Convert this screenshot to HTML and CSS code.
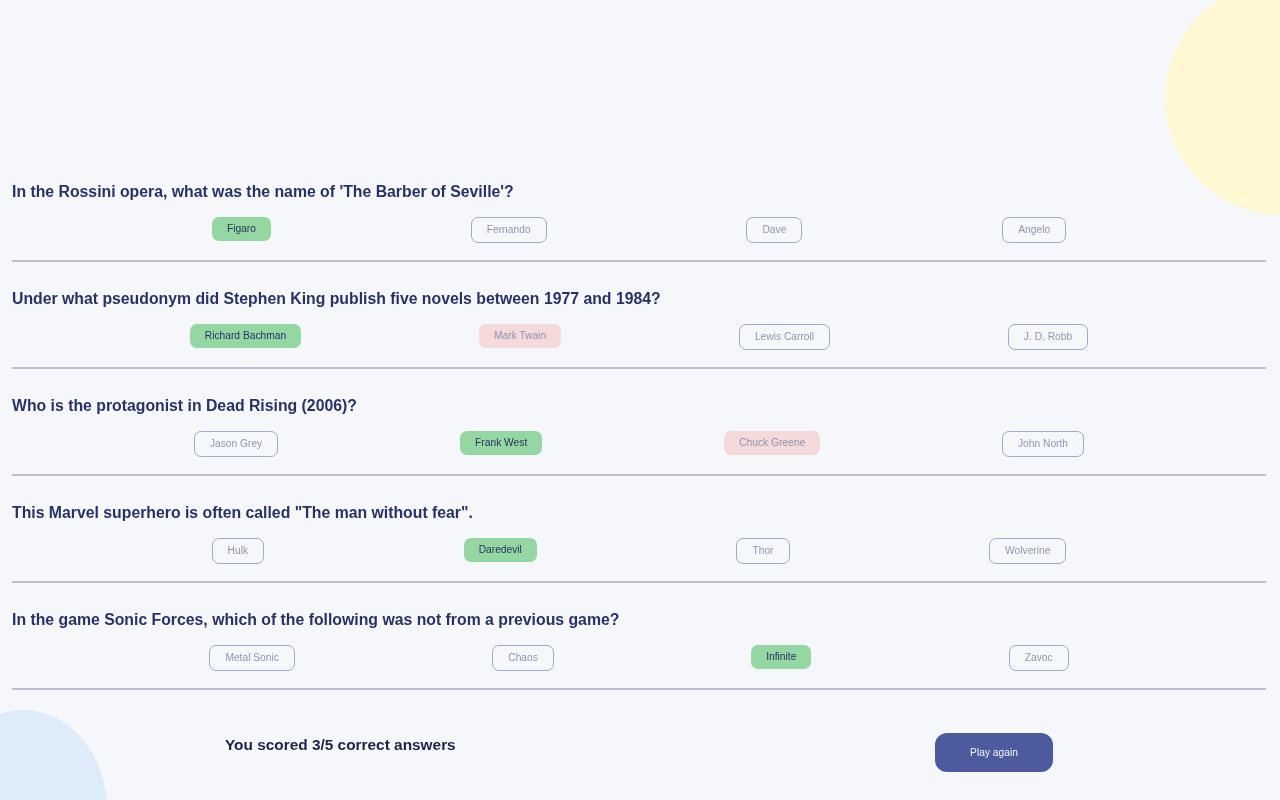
FILE: index.html
```html
<!DOCTYPE html>
<html lang="en">
<head>
<meta charset="utf-8">
<title>Quizzical</title>
<link rel="stylesheet" href="styles.css">
</head>
<body>
<div class="backdrop">
  <div class="blob blob-yellow"></div>
  <div class="blob blob-blue"></div>
</div>
<main class="quiz">
  <section class="question">
    <h2 class="question-title">In the Rossini opera, what was the name of 'The Barber of Seville'?</h2>
    <div class="answers">
      <button class="answer correct">Figaro</button>
      <button class="answer">Fernando</button>
      <button class="answer">Dave</button>
      <button class="answer">Angelo</button>
    </div>
  </section>
  <section class="question">
    <h2 class="question-title">Under what pseudonym did Stephen King publish five novels between 1977 and 1984?</h2>
    <div class="answers">
      <button class="answer correct">Richard Bachman</button>
      <button class="answer wrong">Mark Twain</button>
      <button class="answer">Lewis Carroll</button>
      <button class="answer">J. D. Robb</button>
    </div>
  </section>
  <section class="question">
    <h2 class="question-title">Who is the protagonist in Dead Rising (2006)?</h2>
    <div class="answers">
      <button class="answer">Jason Grey</button>
      <button class="answer correct">Frank West</button>
      <button class="answer wrong">Chuck Greene</button>
      <button class="answer">John North</button>
    </div>
  </section>
  <section class="question">
    <h2 class="question-title">This Marvel superhero is often called "The man without fear".</h2>
    <div class="answers">
      <button class="answer">Hulk</button>
      <button class="answer correct">Daredevil</button>
      <button class="answer">Thor</button>
      <button class="answer">Wolverine</button>
    </div>
  </section>
  <section class="question">
    <h2 class="question-title">In the game Sonic Forces, which of the following was not from a previous game?</h2>
    <div class="answers">
      <button class="answer">Metal Sonic</button>
      <button class="answer">Chaos</button>
      <button class="answer correct">Infinite</button>
      <button class="answer">Zavoc</button>
    </div>
  </section>
  <footer class="result">
    <p class="score">You scored 3/5 correct answers</p>
    <button class="play-again">Play again</button>
  </footer>
</main>
</body>
</html>
```

FILE: styles.css
```css
* {
  box-sizing: border-box;
}

html, body {
  margin: 0;
  height: 100%;
}

body {
  background: #f5f7fb;
  font-family: "Liberation Sans", Arial, sans-serif;
  color: #293264;
  overflow: hidden;
  position: relative;
}

.backdrop {
  position: fixed;
  inset: 0;
  overflow: hidden;
  z-index: 0;
}

.blob {
  position: absolute;
  border-radius: 50%;
}

.blob-yellow {
  left: 1165px;
  top: -19px;
  width: 234px;
  height: 234px;
  background: #fff8d2;
}

.blob-blue {
  left: -60px;
  top: 710px;
  width: 167px;
  height: 200px;
  background: #deebf8;
}

.quiz {
  position: relative;
  z-index: 1;
  padding: 155px 14px 0 12px;
}

.question {
  padding: 27px 0 17px;
  border-bottom: 2px solid #bcbfd0;
}

.question-title {
  margin: 0;
  font-size: 15.8px;
  line-height: 20px;
  font-weight: 700;
  color: #293264;
}

.answers {
  display: flex;
  justify-content: space-evenly;
  align-items: flex-start;
  margin-top: 15px;
}

.answer {
  font-family: "Liberation Sans", Arial, sans-serif;
  font-size: 10.24px;
  height: 26px;
  line-height: 24px;
  padding: 0 15px;
  border: 1px solid #4d5b9e;
  border-radius: 7px;
  background: transparent;
  color: #293264;
  opacity: 0.5;
  cursor: pointer;
}

.answer.correct {
  height: 24px;
  border: none;
  background: #94d7a2;
  opacity: 1;
}

.answer.wrong {
  height: 24px;
  border: none;
  background: #f8bcbc;
}

.result {
  display: flex;
  justify-content: space-between;
  align-items: flex-start;
  padding: 43px 213px 0 213px;
}

.score {
  margin: 3px 0 0;
  font-size: 15.4px;
  line-height: 18px;
  font-weight: 700;
  color: #1d2346;
}

.play-again {
  width: 118px;
  height: 39px;
  border: none;
  border-radius: 12px;
  background: #4d5b9e;
  color: #f5f7fb;
  font-family: "Liberation Sans", Arial, sans-serif;
  font-size: 10.24px;
  cursor: pointer;
}
```
